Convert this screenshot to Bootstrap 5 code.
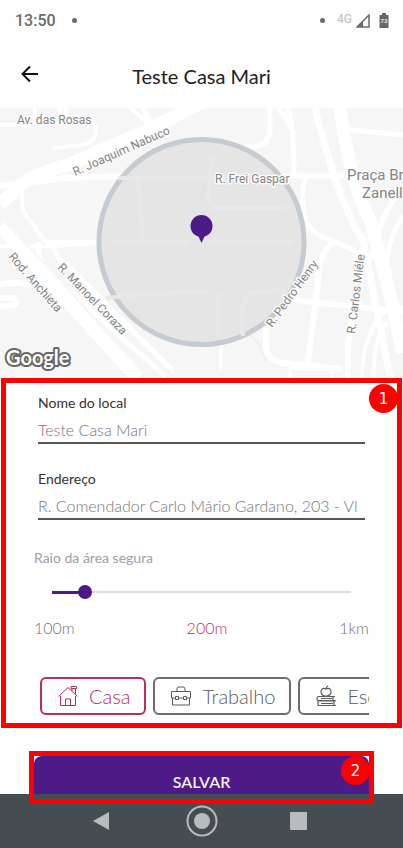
<!DOCTYPE html>
<html lang="pt-BR">
<head>
<meta charset="utf-8">
<meta name="viewport" content="width=device-width, initial-scale=1">
<title>Teste Casa Mari</title>
<link href="https://cdn.jsdelivr.net/npm/bootstrap@5.3.0/dist/css/bootstrap.min.css" rel="stylesheet">
<style>
  :root { --violet: #4d1b87; --pink: #bc2a63; --soft: #777; --callout: #fe0000; }
  body { font-family: Lato, "Open Sans", sans-serif; background: #fefefe; color: #222; }
  .status-bar { height: 41px; padding: 0 13px 0 15px; font-family: Roboto, sans-serif; font-size: 16px; font-weight: 500; color: #6a6a6a; }
  .status-dot { width: 5px; height: 5px; background: #6a6a6a; }
  .net-type { font-size: 12px; line-height: 12px; color: #c8c8c8; }
  .top-bar { height: 67px; }
  .back-btn { left: 17px; top: 20px; line-height: 0; }
  .page-title { font-size: 20px; line-height: 28px; padding-top: 2px; }
  .map-view text { font-family: Roboto, sans-serif; font-size: 12px; fill: #858585; stroke: #fbfbfb; stroke-width: 3px; stroke-linejoin: round; paint-order: stroke; }
  .map-view .place { font-size: 15px; }
  .map-view .brand { font-family: Lato, sans-serif; font-size: 20px; font-weight: 700; fill: #fff; stroke: #666; stroke-width: 4px; }
  .callout-form { border: 5px solid var(--callout); margin: 0 1px; padding: 9px 28px 8px; }
  .callout-num { width: 29px; height: 29px; padding-top: 1px; border-radius: 50%; background: var(--callout); color: #fff; font-family: "DejaVu Sans", sans-serif; font-size: 15px; }
  .num-form { top: 1px; right: -1px; }
  .field { margin: 0 4px 24px; }
  .field label { display: block; font-size: 14px; line-height: 22px; color: #333; margin-bottom: 3px; }
  .field input { display: block; width: 100%; height: 27px; padding: 0; border: 0; border-bottom: 2px solid #555; border-radius: 0; background: transparent; font-size: 16px; color: var(--soft); }
  .range-label { display: block; font-size: 14px; line-height: 20px; color: #a0a0a0; margin-top: 28px; }
  .radius-range { display: block; width: calc(100% - 22px); height: 20px; margin: 14px 11px 16px; appearance: none; -webkit-appearance: none; background: transparent; --fill: 11.1%; }
  .radius-range::-webkit-slider-runnable-track { height: 14px;
    background: linear-gradient(var(--violet), var(--violet)) 7px 50% / var(--fill) 3px no-repeat, linear-gradient(#ddd, #ddd) 50% 50% / calc(100% - 14px) 2px no-repeat; }
  .radius-range::-webkit-slider-thumb { -webkit-appearance: none; width: 14px; height: 14px; border-radius: 50%; background: var(--violet); }
  .range-scale { font-size: 16px; line-height: 20px; color: var(--soft); }
  .range-scale .current { color: var(--pink); }
  .field input, .range-scale, .chip { font-weight: 300; }
  .chips { margin-top: 39px; gap: 7px; padding-left: 6px; scrollbar-width: none; }
  .chips::-webkit-scrollbar { display: none; }
  .chip { height: 38px; padding: 0 14px; gap: 9px; border: 2px solid #6d6d6d; border-radius: 6px; background: #fefefe; color: #5c5c5c; font-size: 20px; white-space: nowrap; }
  .chip svg { fill: none; stroke: currentColor; stroke-width: 1; flex: none; }
  .chip.active { border-color: var(--pink); color: var(--pink); }
  .save-area { margin: 23px 29px 0; padding: 5px 5px 0; }
  .save-btn { height: 38px; padding: 14px 0 0; border: 0; border-radius: 8px 8px 0 0; background: var(--violet); color: #f3eef8; font-size: 16px; line-height: 24px; font-weight: 600; }
  .callout-save { inset: 0 0 -10px 0; border: 5px solid var(--callout); pointer-events: none; }
  .num-save { top: 0; right: -1px; }
  .nav-keys { height: 54px; background: #454c52; padding: 0 89px; }
  .nav-keys button { line-height: 0; }
</style>
<script src="https://cdn.jsdelivr.net/npm/bootstrap@5.3.0/dist/js/bootstrap.bundle.min.js"></script>
</head>
<body>
<div class="status-bar d-flex align-items-center">
  <span>13:50</span>
  <span class="status-dot rounded-circle ms-3"></span>
  <span class="status-dot rounded-circle ms-auto me-2"></span>
  <span class="net-type ms-1 mb-1">4G</span>
  <svg class="ms-1" width="14" height="14" viewBox="0 0 14 14" aria-hidden="true"><path d="M13 1v12H1z" fill="none" stroke="#6a6a6a" stroke-width="1.5"/><path d="M1 13 7 7v6z" fill="#6a6a6a"/></svg>
  <svg class="ms-2" width="12" height="15" viewBox="0 0 12 15" aria-hidden="true"><path d="M4 0h4v2h2.500v13h-9V2H4z" fill="#666"/><text x="6" y="10" font-size="6" text-anchor="middle" fill="#fff">73</text></svg>
</div>

<header class="top-bar position-relative d-flex align-items-center justify-content-center">
  <button type="button" class="back-btn btn p-1 border-0 position-absolute" aria-label="Voltar">
    <svg width="18" height="18" viewBox="0 0 18 18" fill="none" stroke="#111" stroke-width="2"><path d="M17 9H2M9 1.500 1.500 9 9 16.500"/></svg>
  </button>
  <h1 class="page-title fw-normal m-0">Teste Casa Mari</h1>
</header>

<main>
  <svg class="map-view d-block w-100" viewBox="0 0 403 270" role="img" aria-label="Mapa">
    <rect width="403" height="270" fill="#f6f6f6"/>
    <g fill="none" stroke="#fff" stroke-width="5" stroke-linejoin="round">
      <path d="M35 0v10q0 7-9 7H0M66 0q-3 15 8 15h17q5 0 5 8-2 12-14 14l-30 3M60 14V0" stroke-width="4"/>
      <path d="M0 96 22 76Q32 67 70 56L148 22 206-8" stroke-width="13"/>
      <path d="M0 78 65 70 130 68H203" stroke-width="6"/>
      <path d="M22 76V98q3 10 12 20l12 16H110" stroke-width="4"/>
      <path d="M0 138q38 1 54 0 40-3 60-3M130 0l22 18-8-18M143 0l8 26" stroke-width="4"/>
      <path d="M0 118Q24 142 36 158L138 270" stroke-width="14"/>
      <path d="M38 134q0 20 12 32l116 103M54 138q0 10 14 20l106 106" stroke-width="5"/>
      <path d="M0 176q20-3 30 2M0 190h14q5 4 0 7L0 199" stroke-width="6"/>
      <path d="M270 0v24q-3 14-16 15h-14M288 0q6 17 6 68M278 0q12 15 16 26" stroke-width="5"/>
      <path d="M340 0Q350 75 370 112q12 40 22 83l11 50" stroke-width="13"/>
      <path d="M315 0q15 60 28 92t20 40l27 137" stroke-width="7"/>
      <path d="M345 21 403 27M280 68h64M306 68q-7 20 0 45 8 16 28 20l38 18" stroke-width="5"/>
      <path d="M403 82q-14 13-22 34t-9 35M403 108q-14 20-18 55" stroke-width="5"/>
      <path d="M334 133q-16 13-16 40l-10 82M285 191l118 13M266 200v40q2 13 18 15l58 6M348 270q-3-55 13-76" stroke-width="6"/>
      <path d="M362 270q0-40 20-65l21-6M374 270q-2-38 13-55" stroke-width="4"/>
      <path d="M290 270v-9h42v9M221 210v52" stroke-width="4"/>
      <path d="M249 211q-2 16 10 25l7 17" stroke="#e9e9e9" stroke-width="1"/>
      <path d="M3 112 62 174 128 248" stroke="#f7f7f7" stroke-width="2"/>
    </g>
    <circle cx="201.500" cy="134" r="102.500" fill="#e5e5e5" stroke="#c5cbd0" stroke-width="5"/>
    <g fill="none" stroke="#e8e8e8" stroke-width="4">
      <path d="M118 70h115M138 70l5 64M110 134h78M210 100h76M208 134h84M214 48q-6 12-5 48M106 190q50-5 100-6M218 185v45M243 228q-4-43 12-44l30-2"/>
    </g>
    <path d="M201.500 107a11 11 0 0 1 11 11c0 6-4 9.500-8 10.500L201.500 135l-3-6.500c-4-1-8-4.500-8-10.500a11 11 0 0 1 11-11z" fill="#4d1b87"/>
    <text x="17" y="16">Av. das Rosas</text>
    <text transform="translate(75 68) rotate(-24)">R. Joaquim Nabuco</text>
    <text x="215" y="75">R. Frei Gaspar</text>
    <text class="place" x="347" y="72">Praça Br</text>
    <text class="place" x="362" y="90">Zanell</text>
    <text transform="translate(8 149) rotate(49)">Rod. Anchieta</text>
    <text transform="translate(57 160) rotate(46)">R. Manoel Coraza</text>
    <text transform="translate(272 220) rotate(-54)">R. Pedro Henry</text>
    <text transform="translate(355 226) rotate(-83)">R. Carlos Miéle</text>
    <text class="brand" x="6" y="257">Google</text>
  </svg>

  <form id="place-form">
    <section class="callout-form position-relative">
      <span class="callout-num num-form position-absolute d-flex align-items-center justify-content-center">1</span>
      <div class="field">
        <label for="place-name">Nome do local</label>
        <input id="place-name" type="text" value="Teste Casa Mari">
      </div>
      <div class="field">
        <label for="place-address">Endereço</label>
        <input id="place-address" type="text" value="R. Comendador Carlo Mário Gardano, 203 - Vl">
      </div>
      <label class="range-label" for="radius">Raio da área segura</label>
      <input class="radius-range" id="radius" type="range" min="100" max="1000" step="50" value="200">
      <div class="range-scale d-flex justify-content-between">
        <span>100m</span><span class="current">200m</span><span>1km</span>
      </div>
      <div class="chips d-flex overflow-auto">
        <button type="button" class="chip active d-flex align-items-center">
          <svg width="24" height="24" viewBox="0 0 24 24"><path d="M4.500 12v9.500h15V12M9.500 21.500v-6.500h5v6.500M2.500 12.500l9.500-9 9.500 9M16 7V4.500h3.500V10M15 4.500v-2h5.500v2z"/></svg>
          Casa
        </button>
        <button type="button" class="chip d-flex align-items-center">
          <svg width="24" height="24" viewBox="0 0 24 24"><path d="M2.500 7.500h19v6.500h-4M14.500 14h-5M6.500 14h-4V7.500M3.500 14v7h17v-7M8 7.500V5q0-2 2-2h4q2 0 2 2v2.500M6.500 12.500h3v3h-3zM14.500 12.500h3v3h-3z"/></svg>
          Trabalho
        </button>
        <button type="button" class="chip d-flex align-items-center">
          <svg width="24" height="24" viewBox="0 0 24 24"><path stroke-width="1.200" d="M12 5q-5-2-5 3 1 4 4 4h2q4-1 4-4 0-5-5-3zM12 5q0-2 2-3M21 12.500H4q-2 2.500 0 4h17M19 12.500v4M7 14.500h11M22 17H4v4.500h18M20 17v4.500M7 19.500h12"/></svg>
          Escola
        </button>
      </div>
    </section>
    <div class="save-area position-relative">
      <button type="submit" class="save-btn d-block w-100">SALVAR</button>
      <div class="callout-save position-absolute">
        <span class="callout-num num-save position-absolute d-flex align-items-center justify-content-center">2</span>
      </div>
    </div>
  </form>
</main>

<nav class="nav-keys d-flex align-items-center justify-content-between" aria-label="Sistema">
  <button type="button" class="btn p-0 border-0" aria-label="Voltar"><svg width="24" height="24" viewBox="0 0 24 24"><path d="M20 3v18L4 12z" fill="#b7bcbd"/></svg></button>
  <button type="button" class="btn p-0 border-0" aria-label="Início"><svg width="32" height="32" viewBox="0 0 32 32"><circle cx="16" cy="16" r="14.500" fill="none" stroke="#b7bcbd" stroke-width="2"/><circle cx="16" cy="16" r="8" fill="#b7bcbd"/></svg></button>
  <button type="button" class="btn p-0 border-0" aria-label="Recentes"><svg width="24" height="24" viewBox="0 0 24 24"><rect x="0" y="3" width="17" height="18" rx="1" fill="#b7bcbd"/></svg></button>
</nav>
</body>
</html>
